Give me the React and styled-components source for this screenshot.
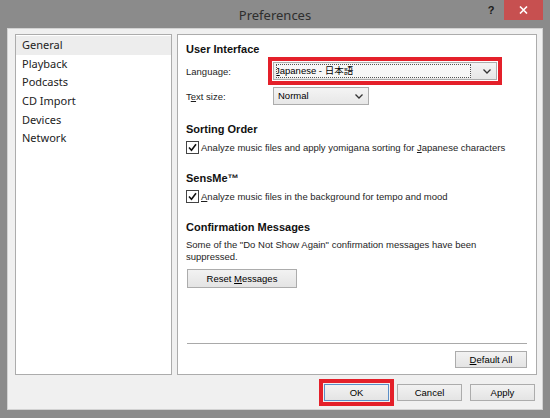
import styled, { createGlobalStyle } from 'styled-components';

const GlobalStyle = createGlobalStyle`
  html, body { margin: 0; padding: 0; }
  body {
    width: 550px;
    height: 418px;
    overflow: hidden;
    background: #8b8b8b;
    font-family: "Liberation Sans", Arial, sans-serif;
  }
  * { box-sizing: border-box; }
`;

const Window = styled.div`
  width: 550px;
  height: 418px;
  display: flex;
  flex-direction: column;
  padding: 0 7px 8px 7px;
  background: #8b8b8b;
`;

const TitleBar = styled.div`
  height: 28px;
  display: grid;
  grid-template-columns: 1fr auto 1fr;
`;

const Title = styled.div`
  grid-column: 2;
  font-family: "Noto Sans", sans-serif;
  font-size: 13px;
  line-height: 30px;
  color: #2e2e2e;
`;

const TitleControls = styled.div`
  grid-column: 3;
  justify-self: end;
  display: flex;
  align-items: flex-start;
`;

const HelpGlyph = styled.div`
  width: 26px;
  height: 20px;
  line-height: 20px;
  text-align: center;
  font-size: 11px;
  font-weight: bold;
  color: #1a1a1a;
`;

const CloseButton = styled.div`
  width: 39px;
  height: 20px;
  background: #c75050;
  display: flex;
  align-items: center;
  justify-content: center;
`;

const Client = styled.div`
  flex: 1;
  display: flex;
  flex-direction: column;
  background: #f0f0f0;
  border: 1px solid #d2d2d2;
  padding: 5px 5px 0 7px;
`;

const Panes = styled.div`
  height: 341px;
  display: flex;
  gap: 5px;
`;

const Pane = styled.div`
  background: #fff;
  border: 1px solid #acacac;
`;

const ListPane = styled(Pane)`
  width: 157px;
  padding-top: 1px;
`;

const ListItem = styled.div`
  height: 18.7px;
  line-height: 18.7px;
  padding-left: 6px;
  font-family: "Noto Sans", sans-serif;
  font-size: 11px;
  color: #222;
  background: ${p => (p.$selected ? '#ededed' : 'transparent')};
`;

const SettingsPane = styled(Pane)`
  flex: 1;
  display: flex;
  flex-direction: column;
  padding: 7px 9px 6px 8px;
`;

const Heading = styled.div`
  font-size: 11px;
  font-weight: bold;
  line-height: 14px;
  color: #111;
  margin-top: ${p => p.$gap || 0}px;
`;

const FormRow = styled.div`
  display: flex;
  align-items: center;
  height: 18px;
  margin-top: ${p => p.$gap}px;
  font-size: 9.5px;
  color: #1e1e1e;
`;

const Label = styled.div`
  width: 87px;
`;

const Select = styled.div`
  width: ${p => p.$width}px;
  height: 18px;
  display: flex;
  align-items: center;
  border: 1px solid #acacac;
  background: linear-gradient(#f4f4f4, #e7e7e7);
  padding: 0 5px 0 2px;
  font-size: 9.5px;
  color: #000;
  outline: ${p => (p.$marked ? '4px solid #e4202a' : 'none')};
  outline-offset: 1px;
`;

const SelectValue = styled.div`
  flex: 1;
  height: 14px;
  line-height: 12px;
  overflow: hidden;
  white-space: nowrap;
  border: 1px ${p => (p.$focused ? 'dotted #555' : 'solid transparent')};
  background: ${p => (p.$focused ? '#f7f7f7' : 'transparent')};
  margin-right: ${p => (p.$focused ? 12 : 6)}px;
  font-family: "Liberation Sans", "Noto Sans CJK JP", sans-serif;
`;

const ClippedText = styled.span`
  display: inline-block;
  margin-left: ${p => (p.$focused ? -2 : 1)}px;
`;

const CheckRow = styled.div`
  display: flex;
  align-items: center;
  height: 14px;
  margin-top: 4px;
  gap: 2px;
  font-size: 9.5px;
  color: #1e1e1e;
`;

const CheckBox = styled.div`
  width: 13px;
  height: 13px;
  border: 1px solid #444;
  background: #fff;
  display: flex;
  align-items: center;
  justify-content: center;
`;

const Description = styled.p`
  margin: 5px 0 0;
  max-width: 300px;
  font-size: 9.5px;
  line-height: 12px;
  color: #1e1e1e;
`;

const Button = styled.div`
  width: ${p => p.$width}px;
  height: ${p => p.$height || 17}px;
  display: flex;
  align-items: center;
  justify-content: center;
  font-size: 9.5px;
  color: #000;
  white-space: pre;
  border: 1px solid ${p => (p.$focused ? '#5b8fc7' : '#acacac')};
  background: linear-gradient(#f2f2f2, #e4e4e4);
  outline: ${p => (p.$marked ? '4px solid #e4202a' : 'none')};
  outline-offset: 1px;
`;

const ResetButton = styled(Button)`
  margin-top: 6px;
  margin-left: 1px;
`;

const Spacer = styled.div`
  flex: 1;
`;

const Separator = styled.div`
  height: 1px;
  margin-left: 1px;
  background: #a9a9a9;
`;

const DefaultButton = styled(Button)`
  align-self: flex-end;
  margin-top: 7px;
`;

const ButtonRow = styled.div`
  display: flex;
  justify-content: flex-end;
  gap: 8px;
  margin-top: 9px;
  padding-right: 2px;
`;

const Chevron = () => (
  <svg width="8" height="5" viewBox="0 0 8 5">
    <polyline points="0.5,0.5 4,4 7.5,0.5" fill="none" stroke="#333" strokeWidth="1.3" />
  </svg>
);

const Check = () => (
  <svg width="9" height="9" viewBox="0 0 9 9">
    <polyline points="1,4.5 3.5,7.2 8,1.3" fill="none" stroke="#111" strokeWidth="1.6" />
  </svg>
);

const sections = ['General', 'Playback', 'Podcasts', 'CD Import', 'Devices', 'Network'];

function App() {
  return (
    <>
      <GlobalStyle />
      <Window>
        <TitleBar>
          <Title>Preferences</Title>
          <TitleControls>
            <HelpGlyph>?</HelpGlyph>
            <CloseButton>
              <svg width="9" height="8" viewBox="0 0 9 8">
                <path d="M1 0.5 L8 7.5 M8 0.5 L1 7.5" stroke="#fff" strokeWidth="1.6" />
              </svg>
            </CloseButton>
          </TitleControls>
        </TitleBar>

        <Client>
          <Panes>
            <ListPane>
              {sections.map((s, i) => (
                <ListItem key={s} $selected={i === 0}>{s}</ListItem>
              ))}
            </ListPane>

            <SettingsPane>
              <Heading>User Interface</Heading>
              <FormRow $gap={6}>
                <Label>Language:</Label>
                <Select $width={224} $marked>
                  <SelectValue $focused>
                    <ClippedText $focused><u>J</u>apanese - 日本語</ClippedText>
                  </SelectValue>
                  <Chevron />
                </Select>
              </FormRow>
              <FormRow $gap={7}>
                <Label>T<u>e</u>xt size:</Label>
                <Select $width={96}>
                  <SelectValue>
                    <ClippedText>Normal</ClippedText>
                  </SelectValue>
                  <Chevron />
                </Select>
              </FormRow>

              <Heading $gap={17}>Sorting Order</Heading>
              <CheckRow>
                <CheckBox><Check /></CheckBox>
                <span>Analyze music files and apply yomigana sorting for <u>J</u>apanese characters</span>
              </CheckRow>

              <Heading $gap={17}>SensMe™</Heading>
              <CheckRow>
                <CheckBox><Check /></CheckBox>
                <span><u>A</u>nalyze music files in the background for tempo and mood</span>
              </CheckRow>

              <Heading $gap={17}>Confirmation Messages</Heading>
              <Description>
                Some of the "Do Not Show Again" confirmation messages have been suppressed.
              </Description>
              <ResetButton $width={110} $height={19}>
                <span>Reset <u>M</u>essages</span>
              </ResetButton>

              <Spacer />
              <Separator />
              <DefaultButton $width={72}>
                <span><u>D</u>efault All</span>
              </DefaultButton>
            </SettingsPane>
          </Panes>

          <ButtonRow>
            <Button $width={65} $focused $marked>OK</Button>
            <Button $width={65}>Cancel</Button>
            <Button $width={65}>Apply</Button>
          </ButtonRow>
        </Client>
      </Window>
    </>
  );
}

export default App;
